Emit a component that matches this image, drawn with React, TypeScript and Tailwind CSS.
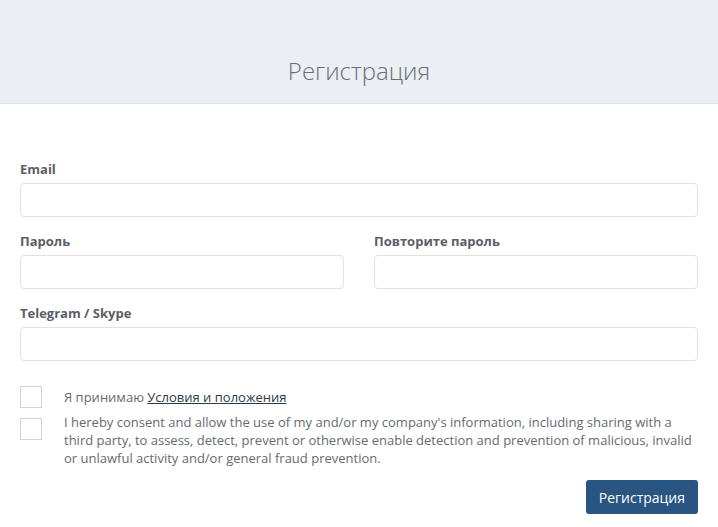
export default function App() {
  return (
    <div className="min-h-[527px] bg-white font-['Open_Sans',sans-serif]">
      <div className="h-[104px] bg-[#ebeef3] border-b border-[#dfe3e8] flex items-end justify-center pb-[16px]">
        <h1 className="text-[24px] font-light text-[#6b6e76] leading-[32px]">Регистрация</h1>
      </div>

      <form className="px-[20px] pt-[56px]">
        <div className="flex flex-col gap-[5px]">
          <label className="text-[13px] font-bold text-[#5b5e66] leading-[18px]">Email</label>
          <input className="h-[34px] w-full rounded-[4px] border border-[#e2e2e2] bg-white outline-none" />
        </div>

        <div className="mt-[15px] flex gap-[30px]">
          <div className="flex flex-1 flex-col gap-[5px]">
            <label className="text-[13px] font-bold text-[#5b5e66] leading-[18px]">Пароль</label>
            <input type="password" className="h-[34px] w-full rounded-[4px] border border-[#e2e2e2] bg-white outline-none" />
          </div>
          <div className="flex flex-1 flex-col gap-[5px]">
            <label className="text-[13px] font-bold text-[#5b5e66] leading-[18px]">Повторите пароль</label>
            <input type="password" className="h-[34px] w-full rounded-[4px] border border-[#e2e2e2] bg-white outline-none" />
          </div>
        </div>

        <div className="mt-[15px] flex flex-col gap-[5px]">
          <label className="text-[13px] font-bold text-[#5b5e66] leading-[18px]">Telegram / Skype</label>
          <input className="h-[34px] w-full rounded-[4px] border border-[#e2e2e2] bg-white outline-none" />
        </div>

        <div className="mt-[25px] flex items-center gap-[22px]">
          <span className="h-[22px] w-[22px] shrink-0 border border-[#d6d2cc] bg-white" />
          <span className="text-[13px] text-[#666a70] leading-[18px]">
            Я принимаю <a href="#" className="text-[#2a3a4a] underline">Условия и положения</a>
          </span>
        </div>

        <div className="mt-[5px] flex items-start gap-[22px]">
          <span className="mt-[5px] h-[22px] w-[22px] shrink-0 border border-[#d6d2cc] bg-white" />
          <p className="text-[13px] text-[#666a70] leading-[18px]">
            I hereby consent and allow the use of my and/or my company's information, including sharing with a third party, to assess, detect, prevent or otherwise enable detection and prevention of malicious, invalid or unlawful activity and/or general fraud prevention.
          </p>
        </div>

        <div className="mt-[13px] flex justify-end">
          <button type="button" className="h-[34px] rounded-[3px] bg-[#285581] px-[13px] text-[14px] text-white">
            Регистрация
          </button>
        </div>
      </form>
    </div>
  );
}
